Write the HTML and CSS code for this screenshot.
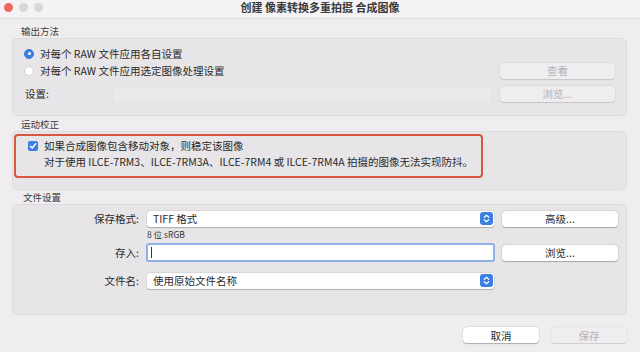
FILE: index.html
```html
<!DOCTYPE html>
<html lang="zh">
<head>
<meta charset="utf-8">
<link rel="stylesheet" href="styles.css">
</head>
<body>
<div class="window">
  <div class="titlebar">
    <div class="lights">
      <span class="light red"></span>
      <span class="light gray"></span>
      <span class="light gray"></span>
    </div>
    <div class="title">创建 像素转换多重拍摄 合成图像</div>
  </div>

  <div class="content">
    <div class="sec-label l1">输出方法</div>
    <div class="group g1">
      <div class="row r1">
        <span class="radio on"></span><span class="txt">对每个 RAW 文件应用各自设置</span>
      </div>
      <div class="row r2">
        <span class="radio"></span><span class="txt grow">对每个 RAW 文件应用选定图像处理设置</span>
        <span class="btn dis wbtn">查看</span>
      </div>
      <div class="row r3">
        <span class="set-label">设置:</span>
        <span class="field dis-field"></span>
        <span class="btn dis wbtn">浏览...</span>
      </div>
    </div>

    <div class="sec-label l2">运动校正</div>
    <div class="group g2">
      <div class="hl">
        <div class="row c1">
          <span class="check"><svg width="8" height="8" viewBox="0 0 8 8"><path d="M1.4 4.2 L3.2 6 L6.7 1.8" fill="none" stroke="#fff" stroke-width="1.5" stroke-linecap="round" stroke-linejoin="round"/></svg></span>
          <span class="txt">如果合成图像包含移动对象，则稳定该图像</span>
        </div>
        <div class="row c2">
          <span class="txt">对于使用 ILCE-7RM3、ILCE-7RM3A、ILCE-7RM4 或 ILCE-7RM4A 拍摄的图像无法实现防抖。</span>
        </div>
      </div>
    </div>

    <div class="sec-label l3">文件设置</div>
    <div class="group g3">
      <div class="frow f1">
        <span class="flabel">保存格式:</span>
        <span class="popup"><span class="ptxt">TIFF 格式</span><span class="stepper"><svg width="7" height="9" viewBox="0 0 7 9"><path d="M1.3 3.3 L3.5 1.3 L5.7 3.3 M1.3 5.7 L3.5 7.7 L5.7 5.7" fill="none" stroke="#fff" stroke-width="1.2" stroke-linecap="round" stroke-linejoin="round"/></svg></span></span>
        <span class="btn fbtn">高级...</span>
      </div>
      <div class="sub">8 位 sRGB</div>
      <div class="frow f2">
        <span class="flabel">存入:</span>
        <span class="input"><span class="caret"></span></span>
        <span class="btn fbtn">浏览...</span>
      </div>
      <div class="frow f3">
        <span class="flabel">文件名:</span>
        <span class="popup"><span class="ptxt">使用原始文件名称</span><span class="stepper"><svg width="7" height="9" viewBox="0 0 7 9"><path d="M1.3 3.3 L3.5 1.3 L5.7 3.3 M1.3 5.7 L3.5 7.7 L5.7 5.7" fill="none" stroke="#fff" stroke-width="1.2" stroke-linecap="round" stroke-linejoin="round"/></svg></span></span>
      </div>
    </div>

    <div class="footer">
      <span class="btn bbtn">取消</span>
      <span class="btn bbtn dis">保存</span>
    </div>
  </div>
</div>
</body>
</html>
```

FILE: styles.css
```css
* { box-sizing: border-box; }
html, body { margin: 0; padding: 0; }
body {
  width: 640px;
  height: 352px;
  overflow: hidden;
  background: #efedf0;
  font-family: "Noto Sans CJK SC", sans-serif;
  font-size: 10.5px;
  color: #2a2a2a;
}
.window { width: 640px; height: 352px; display: flex; flex-direction: column; }

.titlebar {
  height: 19px;
  flex: none;
  background: #f4f2f4;
  border-bottom: 1px solid #dedcdf;
  position: relative;
  display: flex;
  align-items: center;
  justify-content: center;
}
.lights { position: absolute; left: 4px; top: 3px; display: flex; gap: 6px; }
.light { width: 9px; height: 9px; border-radius: 50%; display: block; }
.light.red { background: #ec6a5e; }
.light.gray { background: #d8d6d9; }
.title { font-size: 11px; font-weight: 700; color: #3a3a3a; margin-top: -5px; }

.content { padding: 0 13px 0 12px; display: flex; flex-direction: column; }

.sec-label { font-size: 9.5px; color: #3b3b3b; height: 14px; line-height: 14px; padding-left: 9px; }
.l1 { margin-top: 5px; }
.l2 { margin-top: 1px; }
.l3 { margin-top: 0; padding-left: 11px; }

.group {
  background: #e7e5e8;
  border: 1px solid #dddbde;
  border-radius: 5px;
}
.g1 { height: 78px; padding: 6px 11px 0 11px; }
.g2 { height: 59px; padding: 2px 0 0 1px; }
.g3 { height: 111px; padding: 5px 8px 0 0; }

.row { display: flex; align-items: center; height: 17px; }
.txt { white-space: nowrap; }
.grow { flex: 1; }

.radio {
  width: 10px; height: 10px; border-radius: 50%;
  background: #fff; border: 1px solid #d2d0d3;
  margin-right: 6px; flex: none; position: relative;
}
.radio.on { background: #3d7fe0; border-color: #3474d6; }
.radio.on::after {
  content: ""; position: absolute; left: 2.5px; top: 2.5px;
  width: 3px; height: 3px; border-radius: 50%; background: #fff;
}

.r3 { margin-top: 6px; }
.set-label { width: 88px; padding-left: 1px; flex: none; }
.field { height: 16px; flex: 1; border-radius: 2px; }
.dis-field { background: #ebe9ec; border: 1px solid #e4e2e5; }

.btn {
  display: flex; align-items: center; justify-content: center;
  height: 16px; border-radius: 4px;
  background: #ffffff;
  box-shadow: 0 0.5px 1px rgba(0,0,0,0.25), 0 0 0 0.5px rgba(0,0,0,0.08);
  color: #2a2a2a; flex: none;
}
.btn.dis { background: #efedf0; color: #b4b2b5; box-shadow: 0 0.5px 1px rgba(0,0,0,0.12), 0 0 0 0.5px rgba(0,0,0,0.05); }
.wbtn { width: 115px; margin-left: 8px; }

.hl {
  width: 469px;
  height: 44px;
  border: 2px solid #d9563f;
  border-radius: 4px;
  padding: 1px 0 0 12px;
}
.check {
  width: 10px; height: 10px; border-radius: 2px;
  background: #3d7fe0; margin-right: 6px; flex: none;
  display: flex; align-items: center; justify-content: center;
}
.c2 { padding-left: 16px; margin-top: -1px; }

.frow { display: flex; align-items: center; }
.flabel { width: 134px; text-align: right; padding-right: 8px; flex: none; }
.f1 { height: 17px; }
.popup {
  width: 347px; height: 16px; background: #fff; border-radius: 3px;
  box-shadow: 0 0.5px 1px rgba(0,0,0,0.22), 0 0 0 0.5px rgba(0,0,0,0.07);
  display: flex; align-items: center; justify-content: space-between;
  padding: 0 1px 0 6px;
}
.stepper {
  width: 13px; height: 13px; border-radius: 3px; background: #3b7ee2;
  display: flex; align-items: center; justify-content: center;
}
.fbtn { width: 116px; margin-left: 8px; }
.sub { font-size: 8.5px; padding-left: 134px; height: 14px; line-height: 14px; margin-top: 0; color: #333; }
.f2 { height: 19px; margin-top: 2px; }
.input {
  width: 349px; height: 19px; background: #fff;
  border: 2px solid #8fb0e4; border-radius: 3px; margin-left: -1px;
  display: flex; align-items: center; padding-left: 3px;
}
.caret { width: 1px; height: 11px; background: #333; }
.f2 .fbtn { margin-left: 7px; }
.f3 { height: 17px; margin-top: 10px; }

.footer { display: flex; justify-content: flex-end; gap: 12px; margin-top: 12px; }
.bbtn { width: 76px; height: 16px; }
```
